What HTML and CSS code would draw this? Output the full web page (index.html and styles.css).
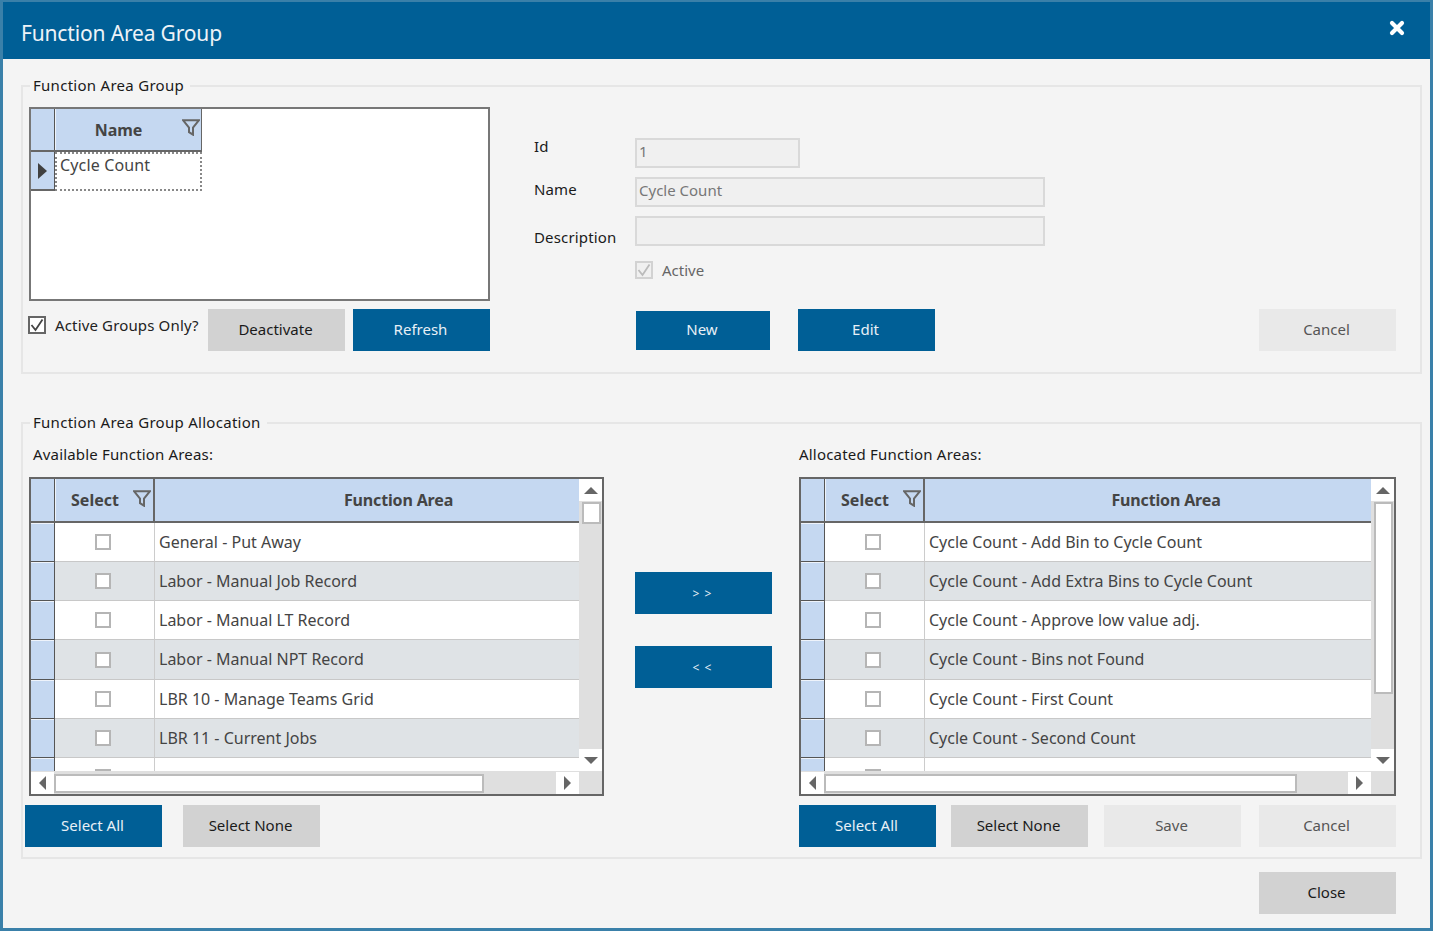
FILE: index.html
```html
<!DOCTYPE html>
<html lang="en">
<head>
<meta charset="utf-8">
<title>Function Area Group</title>
<link rel="stylesheet" href="styles.css">
</head>
<body>
<svg class="defs" width="0" height="0" aria-hidden="true">
  <symbol id="funnel" viewBox="0 0 18 17"><path d="M1 1.2h16l-6 7.3v7.2l-4-2.6V8.500z" fill="none" stroke="#666" stroke-width="2"/></symbol>
  <symbol id="check" viewBox="0 0 14 14"><path d="M1.500 7l4 5L12.500 1.500" fill="none" stroke="currentColor" stroke-width="1.800"/></symbol>
</svg>
<div class="window">
  <header class="titlebar">
    <h1 class="title">Function Area Group</h1>
    <svg class="close-x" viewBox="0 0 16 16" aria-label="Close"><path d="M3 3l10 10M13 3L3 13" stroke="#fff" stroke-width="4.2" stroke-linecap="round"/></svg>
  </header>
  <main class="content">
    <fieldset class="panel panel-top">
      <legend class="legend">Function Area Group</legend>
      <div class="top-layout">
        <div class="top-left">
          <div class="name-grid">
            <div class="name-head">
              <div class="rowhead rowhead-h"></div>
              <div class="name-col">Name<svg class="funnel funnel-name"><use href="#funnel"/></svg></div>
            </div>
            <div class="name-row">
              <div class="rowhead rowhead-cur"><span class="arrow-r big"></span></div>
              <div class="name-cell">Cycle Count</div>
            </div>
          </div>
          <div class="top-actions">
            <label class="chk-label"><span class="box box-on"><svg class="tick"><use href="#check"/></svg></span>Active Groups Only?</label>
            <button class="btn btn-gray btn-deact">Deactivate</button>
            <button class="btn btn-blue btn-refresh">Refresh</button>
          </div>
        </div>
        <div class="top-right">
          <div class="form-row row-id"><span class="lbl">Id</span><div class="inp inp-id">1</div></div>
          <div class="form-row row-name"><span class="lbl">Name</span><div class="inp inp-wide">Cycle Count</div></div>
          <div class="form-row row-desc"><span class="lbl">Description</span><div class="inp inp-wide"></div></div>
          <div class="form-row row-active"><span class="lbl"></span><label class="chk-label chk-off"><span class="box box-dis"><svg class="tick"><use href="#check"/></svg></span>Active</label></div>
          <div class="form-actions">
            <button class="btn btn-blue btn-new">New</button>
            <button class="btn btn-blue btn-edit">Edit</button>
            <button class="btn btn-light btn-cancel-top">Cancel</button>
          </div>
        </div>
      </div>
    </fieldset>

    <fieldset class="panel panel-bottom">
      <legend class="legend">Function Area Group Allocation</legend>
      <div class="alloc">
        <section class="alloc-left">
          <div class="alloc-label">Available Function Areas:</div>
          <div class="dg dg-left">
            <div class="dg-main">
              <div class="dg-head">
                <div class="rowhead rowhead-h"></div>
                <div class="hc-select">Select<svg class="funnel funnel-sel"><use href="#funnel"/></svg></div>
                <div class="hc-area">Function Area</div>
              </div>
              <div class="dg-row"><div class="rowhead"></div><div class="c-select"><span class="box"></span></div><div class="c-area">General - Put Away</div></div>
              <div class="dg-row alt"><div class="rowhead"></div><div class="c-select"><span class="box"></span></div><div class="c-area">Labor - Manual Job Record</div></div>
              <div class="dg-row"><div class="rowhead"></div><div class="c-select"><span class="box"></span></div><div class="c-area">Labor - Manual LT Record</div></div>
              <div class="dg-row alt"><div class="rowhead"></div><div class="c-select"><span class="box"></span></div><div class="c-area">Labor - Manual NPT Record</div></div>
              <div class="dg-row"><div class="rowhead"></div><div class="c-select"><span class="box"></span></div><div class="c-area">LBR 10 - Manage Teams Grid</div></div>
              <div class="dg-row alt"><div class="rowhead"></div><div class="c-select"><span class="box"></span></div><div class="c-area">LBR 11 - Current Jobs</div></div>
              <div class="dg-row"><div class="rowhead"></div><div class="c-select"><span class="box"></span></div><div class="c-area"></div></div>
            </div>
            <div class="vscroll">
              <div class="sb-btn"><span class="arrow-u"></span></div>
              <div class="vtrack"><div class="vthumb vthumb-short"></div></div>
              <div class="sb-btn"><span class="arrow-d"></span></div>
            </div>
            <div class="hscroll">
              <div class="sb-btn-h"><span class="arrow-l"></span></div>
              <div class="htrack"><div class="hthumb hthumb-left"></div></div>
              <div class="sb-btn-h"><span class="arrow-r"></span></div>
            </div>
            <div class="corner"></div>
          </div>
          <div class="btn-row">
            <button class="btn btn-blue">Select All</button>
            <button class="btn btn-gray">Select None</button>
          </div>
        </section>

        <section class="alloc-mid">
          <button class="btn btn-blue btn-move">&gt; &gt;</button>
          <button class="btn btn-blue btn-move">&lt; &lt;</button>
        </section>

        <section class="alloc-right">
          <div class="alloc-label alloc-label-r">Allocated Function Areas:</div>
          <div class="dg dg-right">
            <div class="dg-main">
              <div class="dg-head">
                <div class="rowhead rowhead-h"></div>
                <div class="hc-select">Select<svg class="funnel funnel-sel"><use href="#funnel"/></svg></div>
                <div class="hc-area">Function Area</div>
              </div>
              <div class="dg-row"><div class="rowhead"></div><div class="c-select"><span class="box"></span></div><div class="c-area">Cycle Count - Add Bin to Cycle Count</div></div>
              <div class="dg-row alt"><div class="rowhead"></div><div class="c-select"><span class="box"></span></div><div class="c-area">Cycle Count - Add Extra Bins to Cycle Count</div></div>
              <div class="dg-row"><div class="rowhead"></div><div class="c-select"><span class="box"></span></div><div class="c-area">Cycle Count - Approve low value adj.</div></div>
              <div class="dg-row alt"><div class="rowhead"></div><div class="c-select"><span class="box"></span></div><div class="c-area">Cycle Count - Bins not Found</div></div>
              <div class="dg-row"><div class="rowhead"></div><div class="c-select"><span class="box"></span></div><div class="c-area">Cycle Count - First Count</div></div>
              <div class="dg-row alt"><div class="rowhead"></div><div class="c-select"><span class="box"></span></div><div class="c-area">Cycle Count - Second Count</div></div>
              <div class="dg-row"><div class="rowhead"></div><div class="c-select"><span class="box"></span></div><div class="c-area"></div></div>
            </div>
            <div class="vscroll">
              <div class="sb-btn"><span class="arrow-u"></span></div>
              <div class="vtrack"><div class="vthumb vthumb-long"></div></div>
              <div class="sb-btn"><span class="arrow-d"></span></div>
            </div>
            <div class="hscroll">
              <div class="sb-btn-h"><span class="arrow-l"></span></div>
              <div class="htrack"><div class="hthumb hthumb-right"></div></div>
              <div class="sb-btn-h"><span class="arrow-r"></span></div>
            </div>
            <div class="corner"></div>
          </div>
          <div class="btn-row btn-row-r">
            <button class="btn btn-blue">Select All</button>
            <button class="btn btn-gray">Select None</button>
            <button class="btn btn-light btn-save">Save</button>
            <button class="btn btn-light btn-cancel">Cancel</button>
          </div>
        </section>
      </div>
    </fieldset>

    <div class="footer">
      <button class="btn btn-gray">Close</button>
    </div>
  </main>
</div>
</body>
</html>
```

FILE: styles.css
```css
* { box-sizing: border-box; }
html, body { margin: 0; padding: 0; height: 100%; }
body { font-family: "Noto Sans", "Open Sans", sans-serif; font-size: 15px; color: #1a1a1a; overflow: hidden; }
.defs { display: block; height: 0; }

.window {
  width: 1433px; height: 931px;
  border: 3px solid #3a80a9; border-top-width: 2px;
  background: #f4f4f4;
  display: flex; flex-direction: column;
}
.titlebar {
  height: 57px; flex: none;
  background: #005f96;
  display: flex; align-items: center; justify-content: space-between;
  padding: 0 25px 0 18px;
}
.title { margin: 4px 0 0; font-size: 21px; font-weight: 400; color: #eef3f8; letter-spacing: -0.16px; }
.close-x { width: 16px; height: 16px; margin-top: -6px; }

.content { flex: 1; padding: 17px 8px 0 18px; }

.panel { margin: 0; border: 2px solid #e6e6e6; min-width: 0; }
.panel-top { height: 298px; padding: 11px 6px 0 6px; }
.panel-bottom { height: 446px; margin-top: 39px; padding: 11px 2px 0 2px; }
.legend { padding: 0 6px 2px 3px; line-height: 18px; font-size: 15px; color: #1a1a1a; letter-spacing: 0.28px; }
.panel-top .legend { margin-left: 1px; }
.panel-bottom .legend { margin-left: 5px; }

/* top panel */
.top-layout { display: flex; }
.top-left { width: 461px; flex: none; }
.name-grid { height: 194px; background: #fff; border: 2px solid #777; }
.name-head { display: flex; height: 43px; width: 171px; border-bottom: 2px solid #666; }
.name-row { display: flex; height: 39px; width: 171px; }

.rowhead { width: 24px; flex: none; background: #c5d8f1; border-right: 1px solid #555; border-bottom: 1px solid #555; }
.rowhead-h { border-bottom: 0; }
.rowhead-cur { display: flex; align-items: center; justify-content: center; border-bottom: 2px solid #666; }
.dg-row .rowhead { box-shadow: inset 0 1px 0 #eef3fb; }

.name-col {
  width: 147px; background: #c5d8f1; border-right: 1px solid #666; border-left: 1px solid #eef3fb;
  display: flex; align-items: center; justify-content: center;
  font-weight: 700; color: #444; position: relative; padding-right: 20px; font-size: 16px;
}
.name-cell {
  width: 147px; border: 2px dotted #888; padding: 0 0 0 3px; line-height: 22px; color: #444; font-size: 16px;
  letter-spacing: 0.15px;
}

.funnel { width: 18px; height: 17px; position: absolute; }
.funnel-name { right: 1px; top: 10px; }
.funnel-sel { right: 2px; top: 11px; }

.top-actions { display: flex; align-items: flex-start; margin-top: 8px; }
.chk-label { display: flex; align-items: center; color: #222; }
.top-actions .chk-label { width: 179px; height: 31px; font-size: 15px; letter-spacing: 0.15px; white-space: nowrap; }
.box { width: 16px; height: 16px; display: inline-block; background: #fff; border: 2px solid #b5b5b5; flex: none; }
.box-on { width: 18px; height: 18px; background: #fff; border: 2px solid #666; color: #444; margin-right: 9px; margin-left: -1px; }
.box-dis { width: 18px; height: 18px; background: #f0f0f0; border: 2px solid #d2d2d2; color: #bbb; margin-right: 9px; }
.tick { display: block; width: 14px; height: 14px; }
.chk-off { color: #666; font-size: 15px; }

.top-right { margin-left: 44px; flex: 1; padding-top: 31px; }
.form-row { display: flex; }
.lbl { width: 101px; flex: none; color: #1a1a1a; font-size: 15px; letter-spacing: 0.15px; }
.row-id .lbl { margin-top: -2px; }
.row-name { margin-top: 9px; }
.row-name .lbl { padding-top: 2px; }
.row-desc { margin-top: 9px; height: 30px; }
.row-desc .lbl { padding-top: 11px; }
.row-active { margin-top: 15px; height: 18px; }
.row-active .chk-label { height: 18px; }
.inp { height: 30px; background: #f0f0f0; border: 2px solid #d9d9d9; color: #777; padding-left: 2px; line-height: 23px; font-size: 15px; }
.inp-id { width: 165px; }
.inp-wide { width: 410px; }
.form-actions { display: flex; align-items: center; margin-top: 30px; padding-left: 102px; }

/* buttons */
.btn { width: 137px; height: 42px; border: 0; font: inherit; font-size: 15px; display: block; padding: 0 2px 2px 0; }
.btn-blue { background: #005f96; color: #e8f0f6; }
.btn-gray { background: #d2d2d2; color: #1a1a1a; }
.btn-light { background: #e9e9e9; color: #555; }
.btn-deact { margin-right: 9px; }
.btn-refresh { width: 137px; margin-left: -1px; }
.btn-new { width: 134px; height: 39px; margin-right: 28px; }
.btn-edit { margin-right: 324px; }

/* allocation */
.alloc { display: flex; }
.alloc-left { width: 579px; flex: none; }
.alloc-mid { width: 137px; flex: none; margin-left: 31px; padding-top: 128px; }
.alloc-right { width: 597px; flex: none; margin-left: 27px; }
.alloc-label { margin: 0 0 13px 8px; line-height: 20px; color: #1a1a1a; font-size: 15px; letter-spacing: 0.17px; }
.alloc-label-r { margin-left: 0; letter-spacing: 0.2px; }
.btn-move { margin-bottom: 32px; font-size: 12px; letter-spacing: 1px; padding-bottom: 0; }

.dg {
  height: 319px; background: #fff; border: 2px solid #666;
  display: grid; grid-template-rows: 292px 23px;
}
.dg-left { margin-left: 4px; grid-template-columns: 1fr 23px; width: 575px; }
.dg-right { grid-template-columns: 1fr 23px; width: 597px; }
.dg-main { overflow: hidden; min-width: 0; }

.dg-head { display: flex; height: 44px; border-bottom: 2px solid #666; }
.hc-select, .hc-area {
  background: #c5d8f1; display: flex; align-items: center; justify-content: center;
  font-weight: 700; color: #444; font-size: 16px;
}
.hc-select { width: 100px; flex: none; position: relative; padding-right: 19px; border-right: 2px solid #666; border-left: 1px solid #eef3fb; }
.hc-area { flex: 1; letter-spacing: -0.15px; }
.dg-left .hc-area { padding-left: 63px; }
.dg-right .hc-area { padding-left: 36px; }
.dg-row { display: flex; height: 39px; background: #fff; }
.dg-row:nth-child(5) { height: 40px; }
.dg-row.alt { background: #dfe3e6; }
.c-select { width: 100px; flex: none; display: flex; align-items: center; justify-content: center; padding-right: 3px; border-right: 1px solid #ccc; border-bottom: 1px solid #c8c8c8; }
.c-area { flex: 1; border-bottom: 1px solid #c8c8c8; padding-left: 4px; line-height: 38px; color: #444; font-size: 16px; letter-spacing: 0; white-space: nowrap; }

.vscroll { background: #dfdfdf; display: flex; flex-direction: column; }
.sb-btn { height: 22px; flex: none; background: #fff; display: flex; align-items: center; justify-content: center; }
.vtrack { flex: 1; }
.vthumb { background: #fff; border: 2px solid #bbb; margin: 1px 1px 0 3px; }
.vthumb-short { height: 22px; }
.vthumb-long { height: 192px; }
.hscroll { background: #dfdfdf; display: flex; min-width: 0; justify-content: space-between; padding-top: 1px; }
.sb-btn-h { width: 23px; flex: none; background: #fff; display: flex; align-items: center; justify-content: center; }
.htrack { flex: 1; padding-top: 2px; }
.hthumb { background: #fff; border: 2px solid #bbb; height: 19px; }
.hthumb-left { width: 430px; }
.hthumb-right { width: 473px; }
.corner { background: #dfdfdf; }

.arrow-u, .arrow-d, .arrow-l, .arrow-r { display: block; width: 0; height: 0; border-style: solid; border-color: transparent; }
.arrow-u { border-width: 0 7px 7px; border-bottom-color: #666; }
.arrow-d { border-width: 7px 7px 0; border-top-color: #666; }
.arrow-l { border-width: 7px 7px 7px 0; border-right-color: #666; }
.arrow-r { border-width: 7px 0 7px 7px; border-left-color: #666; }
.arrow-r.big { border-width: 8px 0 8px 9px; border-left-color: #404040; }

.btn-row { display: flex; gap: 21px; margin-top: 9px; }
.btn-row-r { gap: 15px; }
.btn-save { margin-left: 1px; }
.btn-cancel { margin-left: 3px; }

.footer { display: flex; justify-content: flex-end; padding: 13px 26px 0 0; }
```
